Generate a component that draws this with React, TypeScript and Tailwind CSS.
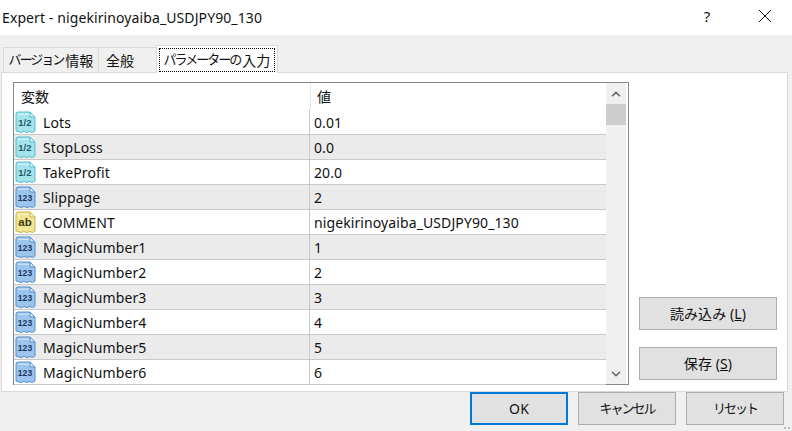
import { ChevronDown, ChevronUp } from "lucide-react";

type Kind = "double" | "int" | "string";

const rows: { name: string; value: string; kind: Kind }[] = [
  { name: "Lots", value: "0.01", kind: "double" },
  { name: "StopLoss", value: "0.0", kind: "double" },
  { name: "TakeProfit", value: "20.0", kind: "double" },
  { name: "Slippage", value: "2", kind: "int" },
  { name: "COMMENT", value: "nigekirinoyaiba_USDJPY90_130", kind: "string" },
  { name: "MagicNumber1", value: "1", kind: "int" },
  { name: "MagicNumber2", value: "2", kind: "int" },
  { name: "MagicNumber3", value: "3", kind: "int" },
  { name: "MagicNumber4", value: "4", kind: "int" },
  { name: "MagicNumber5", value: "5", kind: "int" },
  { name: "MagicNumber6", value: "6", kind: "int" },
];

const iconStyle = {
  double: { fill: "#a3e4ec", edge: "#57bccb", fold: "#e0f7fa", label: "1/2", size: 9.5, ink: "#1f5a6b" },
  int: { fill: "#9dc4ec", edge: "#5590cc", fold: "#dceaf8", label: "123", size: 8.5, ink: "#17375c" },
  string: { fill: "#f1e596", edge: "#c9b348", fold: "#fbf6d2", label: "ab", size: 11.5, ink: "#3f3a12" },
};

function TypeIcon({ kind }: { kind: Kind }) {
  const s = iconStyle[kind];
  return (
    <svg width="21" height="23" viewBox="0 0 21 23" className="shrink-0">
      <path
        d="M3 1H15L20 6V20L17.5 21.5L15 20.5L12 21.5L9 20.5L6 21.5L3 20.5L1 20V3Q1 1 3 1Z"
        fill={s.fill}
        stroke={s.edge}
      />
      <path d="M3 2.5H14.5V4H3Z" fill="#ffffff" opacity="0.45" />
      <path d="M15 1V6H20Z" fill={s.fold} stroke={s.edge} />
      <text
        x="10"
        y="15"
        textAnchor="middle"
        fontSize={s.size}
        fontWeight="700"
        fill={s.ink}
        fontFamily='"Liberation Sans", sans-serif'
      >
        {s.label}
      </text>
    </svg>
  );
}

// Kana in the dialog font is narrower than the kanji
function Kana({ children }: { children: string }) {
  return <span className="text-[13px] tracking-[-2px]">{children}</span>;
}

function Tab({ children, active, width }: { children: React.ReactNode; active?: boolean; width: string }) {
  if (active) {
    return (
      <div className={`${width} h-[28px] -mb-px border border-b-0 border-[#d9d9d9] bg-white p-[2px] z-10`}>
        <div className="h-[24px] border border-dotted border-black flex items-center justify-center whitespace-nowrap">
          {children}
        </div>
      </div>
    );
  }
  return (
    <div className={`${width} h-[25px] border border-b-0 border-[#d9d9d9] flex items-center justify-center whitespace-nowrap`}>
      {children}
    </div>
  );
}

function Button({ children, primary, width }: { children: React.ReactNode; primary?: boolean; width: string }) {
  return (
    <div
      className={`${width} h-[33px] bg-[#e1e1e1] flex items-center justify-center whitespace-nowrap ${
        primary ? "border-2 border-[#0078d7]" : "border border-[#adadad]"
      }`}
    >
      {children}
    </div>
  );
}

export default function App() {
  return (
    <div
      className="relative w-[792px] h-[431px] overflow-hidden flex flex-col bg-[#f0f0f0] text-[14px] tracking-[0.1px] text-[#111]"
      style={{ fontFamily: '"Noto Sans", "Noto Sans CJK JP", sans-serif' }}
    >
      {/* Title bar */}
      <div className="h-[35px] bg-white flex items-center pl-[2px] shrink-0">
        <span className="flex-1">Expert - nigekirinoyaiba_USDJPY90_130</span>
        <span className="w-[20px] text-center text-[15px] mr-[41px] -mt-[2px]">?</span>
        <svg width="14" height="14" viewBox="0 0 14 14" className="mr-[20px] -mt-[3px]">
          <path d="M1 1L13 13M13 1L1 13" stroke="#111" strokeWidth="1" />
        </svg>
      </div>

      {/* Tabs */}
      <div className="h-[37px] flex items-end pl-[3px] shrink-0">
        <Tab width="w-[96px]">
          <Kana>バージョン</Kana>
          <span className="ml-[2px]">情報</span>
        </Tab>
        <Tab width="w-[59px] -ml-px pr-[15px]">全般</Tab>
        <Tab width="w-[122px] -ml-px" active>
          <Kana>パラメーターの</Kana>
          <span className="ml-[2px]">入力</span>
        </Tab>
      </div>

      {/* Tab page */}
      <div className="w-[787px] ml-px h-[320px] shrink-0 border border-[#d9d9d9] bg-white flex pt-[9px] pl-[11px]">
        <div className="w-[616px] h-[303px] border border-[#828790] flex">
          <div className="flex-1 min-w-0">
            <div className="h-[27px] flex items-center">
              <div className="w-[296px] pl-[7px]">変数</div>
              <div className="pl-[6px] border-l border-[#e5e5e5] h-full flex items-center">値</div>
            </div>
            {rows.map((row, i) => (
              <div
                key={row.name}
                className={`h-[25px] flex items-center border-b border-[#c8c8c8] ${
                  i % 2 === 1 ? "bg-[#ebebeb]" : "bg-white"
                }`}
              >
                <div className="w-[296px] h-full flex items-center pl-px gap-[7px] border-r border-[#c8c8c8]">
                  <TypeIcon kind={row.kind} />
                  <span>{row.name}</span>
                </div>
                <div className="pl-[4px]">{row.value}</div>
              </div>
            ))}
          </div>
          <div className="w-[20px] mr-[2px] shrink-0 bg-[#f0f0f0] flex flex-col items-center">
            <div className="h-[21px] flex items-center justify-center">
              <ChevronUp size={14} strokeWidth={2.5} color="#606060" />
            </div>
            <div className="w-full h-[21px] bg-[#cdcdcd]" />
            <div className="flex-1" />
            <div className="h-[21px] flex items-center justify-center">
              <ChevronDown size={14} strokeWidth={2.5} color="#606060" />
            </div>
          </div>
        </div>
        <div className="ml-[10px] mt-[215px] flex flex-col gap-[17px]">
          <Button width="w-[138px]">
            <span>
              読み込み (<span className="underline">L</span>)
            </span>
          </Button>
          <Button width="w-[138px]">
            <span>
              保存 (<span className="underline">S</span>)
            </span>
          </Button>
        </div>
      </div>

      {/* Footer buttons */}
      <div className="flex justify-end gap-[10px] pr-[8px]">
        <Button width="w-[98px]" primary>
          OK
        </Button>
        <Button width="w-[98px]">
          <Kana>キャンセル</Kana>
        </Button>
        <Button width="w-[98px]">
          <Kana>リセット</Kana>
        </Button>
      </div>

      {/* Resize grip */}
      <svg width="8" height="4" viewBox="0 0 8 4" className="absolute right-0 bottom-0">
        <path d="M0 0H2V2H0ZM4 0H6V2H4Z" fill="#bdbdbd" />
      </svg>
    </div>
  );
}
